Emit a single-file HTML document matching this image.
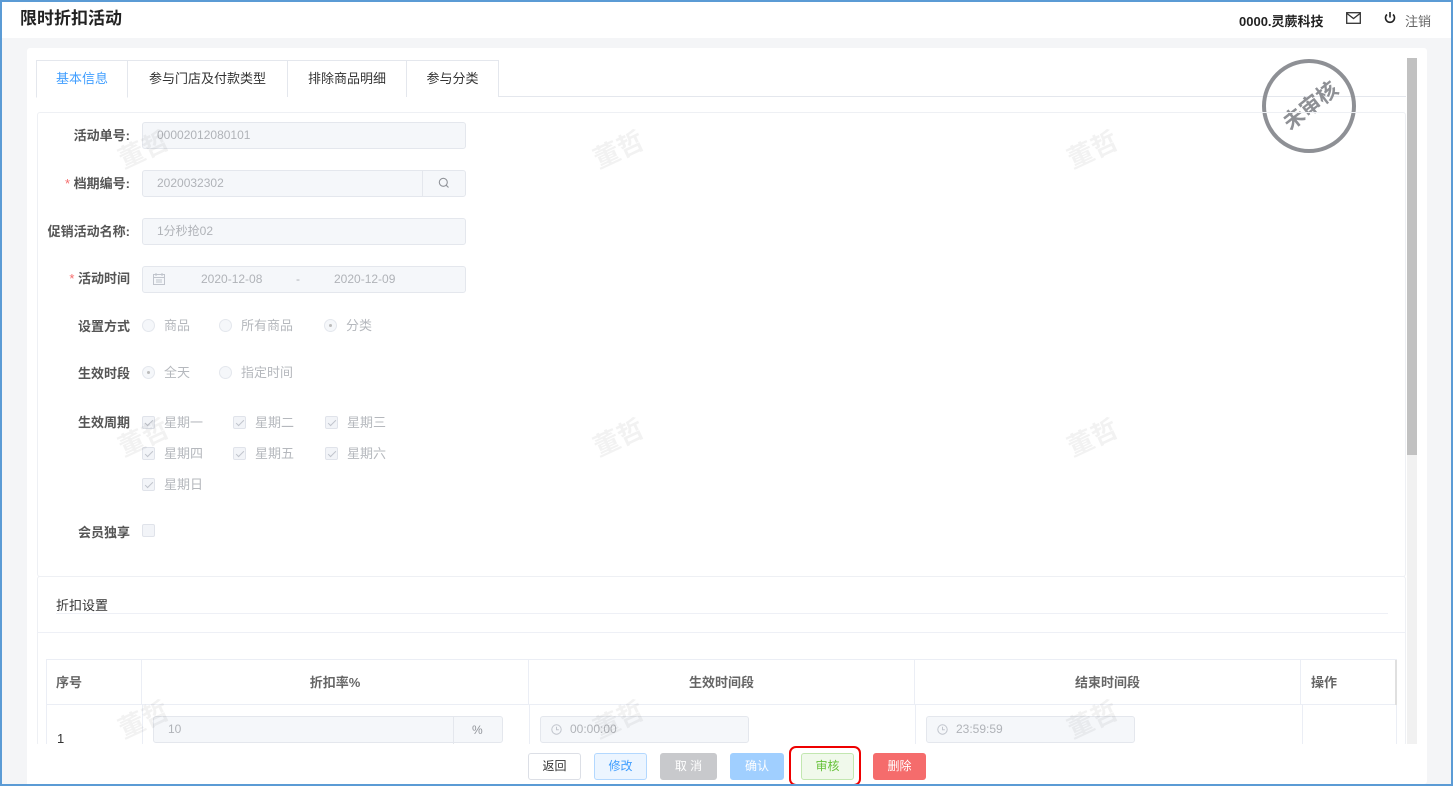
<!DOCTYPE html>
<html><head><meta charset="utf-8"><style>
*{box-sizing:border-box;margin:0;padding:0}
body{width:1453px;height:786px;overflow:hidden;font-family:"Liberation Sans","Noto Sans CJK SC",sans-serif;font-size:13px;color:#333;background:#f4f5f7;position:relative}
.frame{position:absolute;inset:0;border:2px solid #5b9bd5;z-index:50;pointer-events:none}
.hdr{position:absolute;left:0;top:0;width:1453px;height:38px;background:#fff}
.abs{position:absolute}
.card{position:absolute;left:27px;top:48px;width:1400px;height:736px;background:#fff;border-radius:3px}
.inp{position:absolute;height:27px;background:#f5f7fa;border:1px solid #e4e7ed;border-radius:3px;color:#b0b3b8;font-size:12px;line-height:25px;padding-left:14px}
.lbl{position:absolute;font-size:13px;font-weight:bold;color:#555;text-align:right}
.star{color:#f56c6c;font-weight:normal}
.opt{position:absolute;font-size:13px;color:#b5b8bd}
.rad{display:inline-block;width:13px;height:13px;border-radius:50%;border:1px solid #e4e7ed;background:#f5f7fa;vertical-align:-2px;margin-right:9px;position:relative}
.rad.on:after{content:"";position:absolute;left:4px;top:4px;width:3px;height:3px;border-radius:50%;background:#bbb}
.chk{display:inline-block;width:13px;height:13px;border-radius:2px;border:1px solid #e0e3ea;background:#f2f4f8;vertical-align:-2px;margin-right:9px;position:relative}
.chk.on:after{content:"";position:absolute;left:4px;top:1px;width:3px;height:7px;border:solid #c0c4cc;border-width:0 1px 1px 0;transform:rotate(45deg)}
.tab{position:absolute;top:60px;height:37px;border:1px solid #e4e7ed;border-bottom:none;line-height:36px;text-align:center;font-size:13px;color:#333;background:#fff}
.wm{position:absolute;color:rgba(0,0,0,0.05);font-size:26px;transform:rotate(-25deg);font-weight:bold}
.th{position:absolute;top:660px;height:45px;line-height:45px;font-weight:bold;color:#666;font-size:13px;border-right:1px solid #ebeef5}
.btn{position:absolute;top:753px;height:27px;line-height:25px;text-align:center;font-size:12px;border-radius:3px;border:1px solid}
</style></head><body>
<div class="frame"></div>
<div class="hdr">
<div class="abs" style="left:20px;top:4px;font-size:17px;font-weight:bold;color:#222">限时折扣活动</div>
<div class="abs" style="left:1239px;top:11px;font-size:13px;font-weight:bold;color:#222">0000.灵蕨科技</div>
<svg class="abs" style="left:1346px;top:12px" width="15" height="12" viewBox="0 0 15 12"><rect x="0.7" y="0.7" width="13.6" height="10.6" fill="none" stroke="#333" stroke-width="1.3"/><path d="M1 1.5L7.5 6.5L14 1.5" fill="none" stroke="#333" stroke-width="1.3"/></svg>
<svg class="abs" style="left:1384px;top:11px" width="12" height="13" viewBox="0 0 12 13"><path d="M3 3.5A4.5 4.5 0 1 0 9 3.5" fill="none" stroke="#222" stroke-width="1.6"/><path d="M6 1V6.5" stroke="#222" stroke-width="1.6"/></svg>
<div class="abs" style="left:1405px;top:11px;font-size:13px;color:#666">注销</div>
</div>
<div class="card"></div>
<div class="abs" style="left:1407px;top:58px;width:10px;height:686px;background:#f1f1f1"></div>
<div class="abs" style="left:1407px;top:58px;width:10px;height:397px;background:#c1c1c1"></div>
<div class="abs" style="left:36px;top:96px;width:1370px;height:1px;background:#e4e7ed"></div>
<div class="tab" style="left:36px;width:92px;color:#409eff;border-bottom:1px solid #fff;height:38px">基本信息</div>
<div class="tab" style="left:127px;width:161px">参与门店及付款类型</div>
<div class="tab" style="left:287px;width:120px">排除商品明细</div>
<div class="tab" style="left:406px;width:93px">参与分类</div>
<div class="abs" style="left:1262px;top:59px;width:94px;height:94px;border-radius:50%;border:4px solid #8e9095"></div>
<div class="abs" style="left:1270px;top:90px;width:80px;text-align:center;font-size:21px;font-weight:bold;color:#8e9095;transform:rotate(-38deg)">未审核</div>
<div class="abs" style="left:37px;top:112px;width:1369px;height:465px;border:1px solid #eef0f4;border-radius:3px"></div>
<div class="lbl" style="left:40px;top:125px;width:90px">活动单号:</div>
<div class="inp" style="left:142px;top:122px;width:324px">00002012080101</div>
<div class="lbl" style="left:40px;top:173px;width:90px"><span class="star">*</span> 档期编号:</div>
<div class="inp" style="left:142px;top:170px;width:324px">2020032302</div>
<div class="abs" style="left:422px;top:171px;width:1px;height:25px;background:#e4e7ed"></div>
<svg class="abs" style="left:438px;top:177px" width="12" height="12" viewBox="0 0 12 12"><circle cx="5.3" cy="5.3" r="4" fill="none" stroke="#909399" stroke-width="1.1"/><path d="M8.3 8.3L10.5 10.5" stroke="#909399" stroke-width="1.1"/></svg>
<div class="lbl" style="left:40px;top:221px;width:90px">促销活动名称:</div>
<div class="inp" style="left:142px;top:218px;width:324px">1分秒抢02</div>
<div class="lbl" style="left:40px;top:268px;width:90px"><span class="star">*</span> 活动时间</div>
<div class="inp" style="left:142px;top:266px;width:324px"></div>
<svg class="abs" style="left:153px;top:273px" width="12" height="12" viewBox="0 0 12 12"><rect x="0.5" y="1.5" width="11" height="10" fill="none" stroke="#c0c4cc"/><path d="M0.5 4.5H11.5M3 0V3M9 0V3M3 7H9M3 9H9" stroke="#c0c4cc"/></svg>
<div class="abs" style="left:201px;top:272px;font-size:12px;color:#b0b3b8">2020-12-08</div>
<div class="abs" style="left:296px;top:272px;font-size:12px;color:#b0b3b8">-</div>
<div class="abs" style="left:334px;top:272px;font-size:12px;color:#b0b3b8">2020-12-09</div>
<div class="lbl" style="left:40px;top:316px;width:90px">设置方式</div>
<div class="opt" style="left:142px;top:315px"><span class="rad"></span>商品</div>
<div class="opt" style="left:219px;top:315px"><span class="rad"></span>所有商品</div>
<div class="opt" style="left:324px;top:315px"><span class="rad on"></span>分类</div>
<div class="lbl" style="left:40px;top:363px;width:90px">生效时段</div>
<div class="opt" style="left:142px;top:362px"><span class="rad on"></span>全天</div>
<div class="opt" style="left:219px;top:362px"><span class="rad"></span>指定时间</div>
<div class="lbl" style="left:40px;top:412px;width:90px">生效周期</div>
<div class="opt" style="left:142px;top:412px"><span class="chk on"></span>星期一</div>
<div class="opt" style="left:233px;top:412px"><span class="chk on"></span>星期二</div>
<div class="opt" style="left:325px;top:412px"><span class="chk on"></span>星期三</div>
<div class="opt" style="left:142px;top:443px"><span class="chk on"></span>星期四</div>
<div class="opt" style="left:233px;top:443px"><span class="chk on"></span>星期五</div>
<div class="opt" style="left:325px;top:443px"><span class="chk on"></span>星期六</div>
<div class="opt" style="left:142px;top:474px"><span class="chk on"></span>星期日</div>
<div class="lbl" style="left:40px;top:522px;width:90px">会员独享</div>
<div class="opt" style="left:142px;top:523px"><span class="chk"></span></div>
<div class="abs" style="left:37px;top:576px;width:1369px;height:170px;border:1px solid #eef0f4;border-bottom:none;border-radius:3px"></div>
<div class="abs" style="left:56px;top:595px;font-size:13px;color:#333">折扣设置</div>
<div class="abs" style="left:56px;top:613px;width:1332px;height:1px;background:#eef0f6"></div>
<div class="abs" style="left:37px;top:632px;width:1369px;height:1px;background:#eef0f6"></div>
<div class="abs" style="left:46px;top:659px;width:1351px;height:86px;border:1px solid #ebeef5;border-bottom:none"></div>
<div class="abs" style="left:46px;top:704px;width:1351px;height:1px;background:#ebeef5"></div>
<div class="th" style="left:46px;width:96px;padding-left:10px">序号</div>
<div class="th" style="left:142px;width:387px;text-align:center">折扣率%</div>
<div class="th" style="left:529px;width:386px;text-align:center">生效时间段</div>
<div class="th" style="left:915px;width:386px;text-align:center">结束时间段</div>
<div class="th" style="left:1301px;width:96px;padding-left:10px;border-right:2px solid #e0e0e0">操作</div>
<div class="abs" style="left:142px;top:705px;width:1px;height:40px;background:#ebeef5"></div>
<div class="abs" style="left:529px;top:705px;width:1px;height:40px;background:#ebeef5"></div>
<div class="abs" style="left:915px;top:705px;width:1px;height:40px;background:#ebeef5"></div>
<div class="abs" style="left:1302px;top:705px;width:1px;height:40px;background:#ebeef5"></div>
<div class="abs" style="left:57px;top:731px;font-size:13px;color:#333">1</div>
<div class="inp" style="left:153px;top:716px;width:350px">10</div>
<div class="abs" style="left:453px;top:717px;width:1px;height:27px;background:#e4e7ed"></div>
<div class="abs" style="left:472px;top:723px;font-size:12px;color:#909399">%</div>
<div class="inp" style="left:540px;top:716px;width:209px;padding-left:29px">00:00:00</div>
<div class="inp" style="left:926px;top:716px;width:209px;padding-left:29px">23:59:59</div>
<svg class="abs" style="left:551px;top:724px" width="11" height="11" viewBox="0 0 11 11"><circle cx="5.5" cy="5.5" r="4.7" fill="none" stroke="#c0c4cc"/><path d="M5.5 2.8V5.7H7.8" fill="none" stroke="#c0c4cc"/></svg>
<svg class="abs" style="left:937px;top:724px" width="11" height="11" viewBox="0 0 11 11"><circle cx="5.5" cy="5.5" r="4.7" fill="none" stroke="#c0c4cc"/><path d="M5.5 2.8V5.7H7.8" fill="none" stroke="#c0c4cc"/></svg>
<div class="abs" style="left:27px;top:744px;width:1380px;height:40px;background:#fff"></div>
<div class="btn" style="left:528px;width:53px;border-color:#dcdfe6;color:#333;background:#fff">返回</div>
<div class="btn" style="left:594px;width:53px;border-color:#b3d8ff;color:#409eff;background:#ecf5ff">修改</div>
<div class="btn" style="left:660px;width:57px;border-color:#c8c9cc;color:#fff;background:#c8c9cc">取 消</div>
<div class="btn" style="left:730px;width:54px;border-color:#a0cfff;color:#fff;background:#a0cfff">确认</div>
<div class="abs" style="left:789px;top:746px;width:72px;height:40px;border:2px solid #e00;border-radius:7px"></div>
<div class="btn" style="left:801px;width:53px;border-color:#c2e7b0;color:#67c23a;background:#f0f9eb">审核</div>
<div class="btn" style="left:873px;width:53px;border-color:#f56c6c;color:#fff;background:#f56c6c">删除</div>
<div class="wm" style="left:117px;top:130px">董哲</div>
<div class="wm" style="left:592px;top:130px">董哲</div>
<div class="wm" style="left:1066px;top:130px">董哲</div>
<div class="wm" style="left:117px;top:418px">董哲</div>
<div class="wm" style="left:592px;top:418px">董哲</div>
<div class="wm" style="left:1066px;top:418px">董哲</div>
<div class="wm" style="left:117px;top:700px">董哲</div>
<div class="wm" style="left:592px;top:700px">董哲</div>
<div class="wm" style="left:1066px;top:700px">董哲</div>
</body></html>
